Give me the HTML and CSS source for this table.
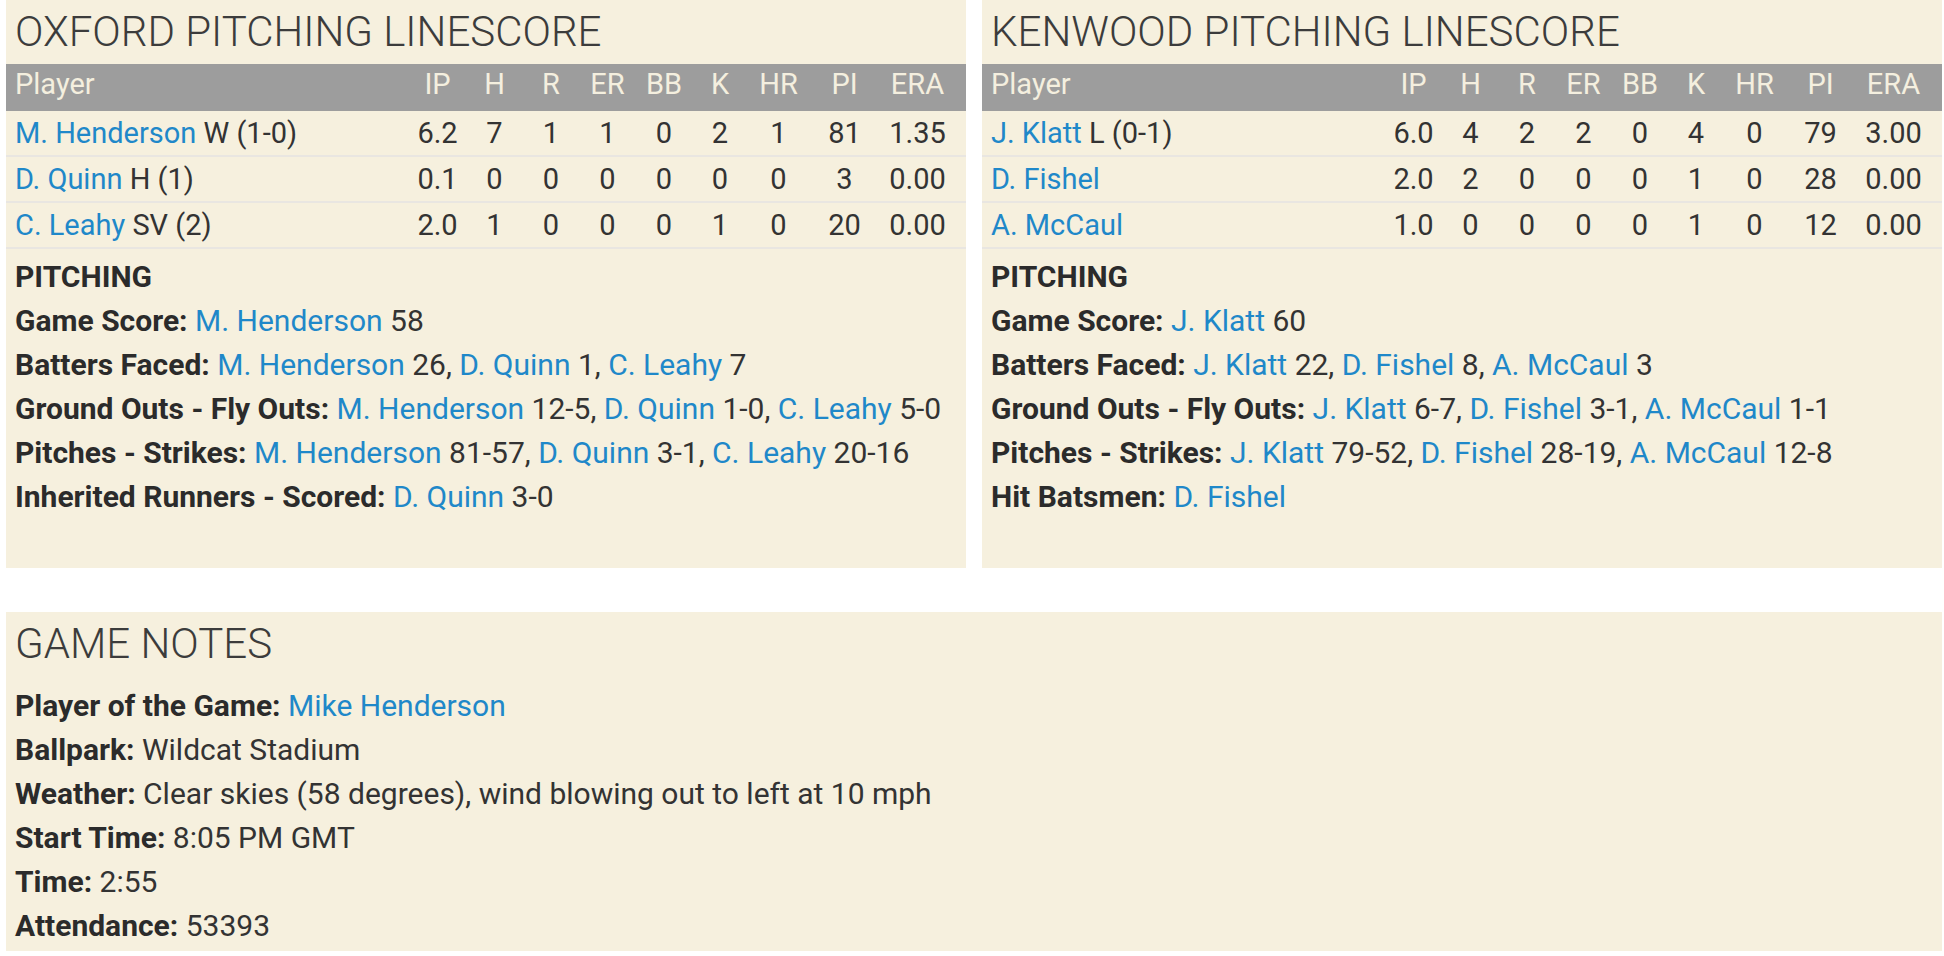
FILE: index.html
```html
<!DOCTYPE html>
<html lang="en">
<head>
<meta charset="utf-8">
<title>Pitching Linescore</title>
<link rel="stylesheet" href="styles.css">
</head>
<body>
<div class="page">
  <div class="panels">
    <section class="panel">
      <h2 class="panel-title">OXFORD PITCHING LINESCORE</h2>
      <div class="linescore">
        <div class="ls-row ls-head">
          <div class="c-player">Player</div><div>IP</div><div>H</div><div>R</div><div>ER</div><div>BB</div><div>K</div><div>HR</div><div>PI</div><div>ERA</div>
        </div>
        <div class="ls-row">
          <div class="c-player"><a href="#">M. Henderson</a> W (1-0)</div><div>6.2</div><div>7</div><div>1</div><div>1</div><div>0</div><div>2</div><div>1</div><div>81</div><div>1.35</div>
        </div>
        <div class="ls-row">
          <div class="c-player"><a href="#">D. Quinn</a> H (1)</div><div>0.1</div><div>0</div><div>0</div><div>0</div><div>0</div><div>0</div><div>0</div><div>3</div><div>0.00</div>
        </div>
        <div class="ls-row">
          <div class="c-player"><a href="#">C. Leahy</a> SV (2)</div><div>2.0</div><div>1</div><div>0</div><div>0</div><div>0</div><div>1</div><div>0</div><div>20</div><div>0.00</div>
        </div>
      </div>
      <div class="notes">
        <div class="note-head">PITCHING</div>
        <div class="note"><b>Game Score:</b> <a href="#">M. Henderson</a> 58</div>
        <div class="note"><b>Batters Faced:</b> <a href="#">M. Henderson</a> 26, <a href="#">D. Quinn</a> 1, <a href="#">C. Leahy</a> 7</div>
        <div class="note"><b>Ground Outs - Fly Outs:</b> <a href="#">M. Henderson</a> 12-5, <a href="#">D. Quinn</a> 1-0, <a href="#">C. Leahy</a> 5-0</div>
        <div class="note"><b>Pitches - Strikes:</b> <a href="#">M. Henderson</a> 81-57, <a href="#">D. Quinn</a> 3-1, <a href="#">C. Leahy</a> 20-16</div>
        <div class="note"><b>Inherited Runners - Scored:</b> <a href="#">D. Quinn</a> 3-0</div>
      </div>
    </section>
    <section class="panel">
      <h2 class="panel-title">KENWOOD PITCHING LINESCORE</h2>
      <div class="linescore">
        <div class="ls-row ls-head">
          <div class="c-player">Player</div><div>IP</div><div>H</div><div>R</div><div>ER</div><div>BB</div><div>K</div><div>HR</div><div>PI</div><div>ERA</div>
        </div>
        <div class="ls-row">
          <div class="c-player"><a href="#">J. Klatt</a> L (0-1)</div><div>6.0</div><div>4</div><div>2</div><div>2</div><div>0</div><div>4</div><div>0</div><div>79</div><div>3.00</div>
        </div>
        <div class="ls-row">
          <div class="c-player"><a href="#">D. Fishel</a></div><div>2.0</div><div>2</div><div>0</div><div>0</div><div>0</div><div>1</div><div>0</div><div>28</div><div>0.00</div>
        </div>
        <div class="ls-row">
          <div class="c-player"><a href="#">A. McCaul</a></div><div>1.0</div><div>0</div><div>0</div><div>0</div><div>0</div><div>1</div><div>0</div><div>12</div><div>0.00</div>
        </div>
      </div>
      <div class="notes">
        <div class="note-head">PITCHING</div>
        <div class="note"><b>Game Score:</b> <a href="#">J. Klatt</a> 60</div>
        <div class="note"><b>Batters Faced:</b> <a href="#">J. Klatt</a> 22, <a href="#">D. Fishel</a> 8, <a href="#">A. McCaul</a> 3</div>
        <div class="note"><b>Ground Outs - Fly Outs:</b> <a href="#">J. Klatt</a> 6-7, <a href="#">D. Fishel</a> 3-1, <a href="#">A. McCaul</a> 1-1</div>
        <div class="note"><b>Pitches - Strikes:</b> <a href="#">J. Klatt</a> 79-52, <a href="#">D. Fishel</a> 28-19, <a href="#">A. McCaul</a> 12-8</div>
        <div class="note"><b>Hit Batsmen:</b> <a href="#">D. Fishel</a></div>
      </div>
    </section>
  </div>
  <section class="panel game-notes">
    <h2 class="panel-title">GAME NOTES</h2>
    <div class="notes">
      <div class="note"><b>Player of the Game:</b> <a href="#">Mike Henderson</a></div>
      <div class="note"><b>Ballpark:</b> Wildcat Stadium</div>
      <div class="note"><b>Weather:</b> Clear skies (58 degrees), wind blowing out to left at 10 mph</div>
      <div class="note"><b>Start Time:</b> 8:05 PM GMT</div>
      <div class="note"><b>Time:</b> 2:55</div>
      <div class="note"><b>Attendance:</b> 53393</div>
    </div>
  </section>
</div>
</body>
</html>
```

FILE: styles.css
```css
html, body {
  margin: 0;
  padding: 0;
  background: #ffffff;
}

body {
  font-family: Roboto, "Liberation Sans", sans-serif;
  font-size: 29px;
  color: #333333;
}

.page {
  padding: 0 2px 0 6px;
  display: flex;
  flex-direction: column;
  gap: 44px;
}

.panels {
  display: flex;
  gap: 16px;
}

.panel {
  background: #f6f0de;
  width: 960px;
  padding-bottom: 49px;
}

.game-notes {
  width: auto;
  padding-bottom: 3px;
}

.panel-title {
  margin: 0;
  padding: 0 9px;
  font-size: 42px;
  font-weight: 300;
  line-height: 64px;
  color: #3c3c3c;
}

a {
  color: #1f88c9;
  text-decoration: none;
}

.ls-row {
  display: grid;
  grid-template-columns: 403px 57px 57px 56px 57px 56px 56px 61px 71px 75px;
  padding-right: 11px;
  line-height: 44px;
  border-bottom: 2px solid #e9e6e1;
  text-align: center;
}

.ls-row .c-player {
  text-align: left;
  padding-left: 9px;
}

.ls-head {
  background: #9d9d9d;
  color: #f4efdf;
  line-height: 41px;
  padding-bottom: 6px;
  border-bottom: none;
}

.notes {
  padding: 6px 9px 0;
  font-size: 30px;
}

.game-notes .notes {
  padding-top: 8px;
}

.note-head,
.note b {
  font-weight: 700;
  color: #2b2b2b;
}

.note-head,
.note {
  line-height: 44px;
  white-space: nowrap;
}
```
